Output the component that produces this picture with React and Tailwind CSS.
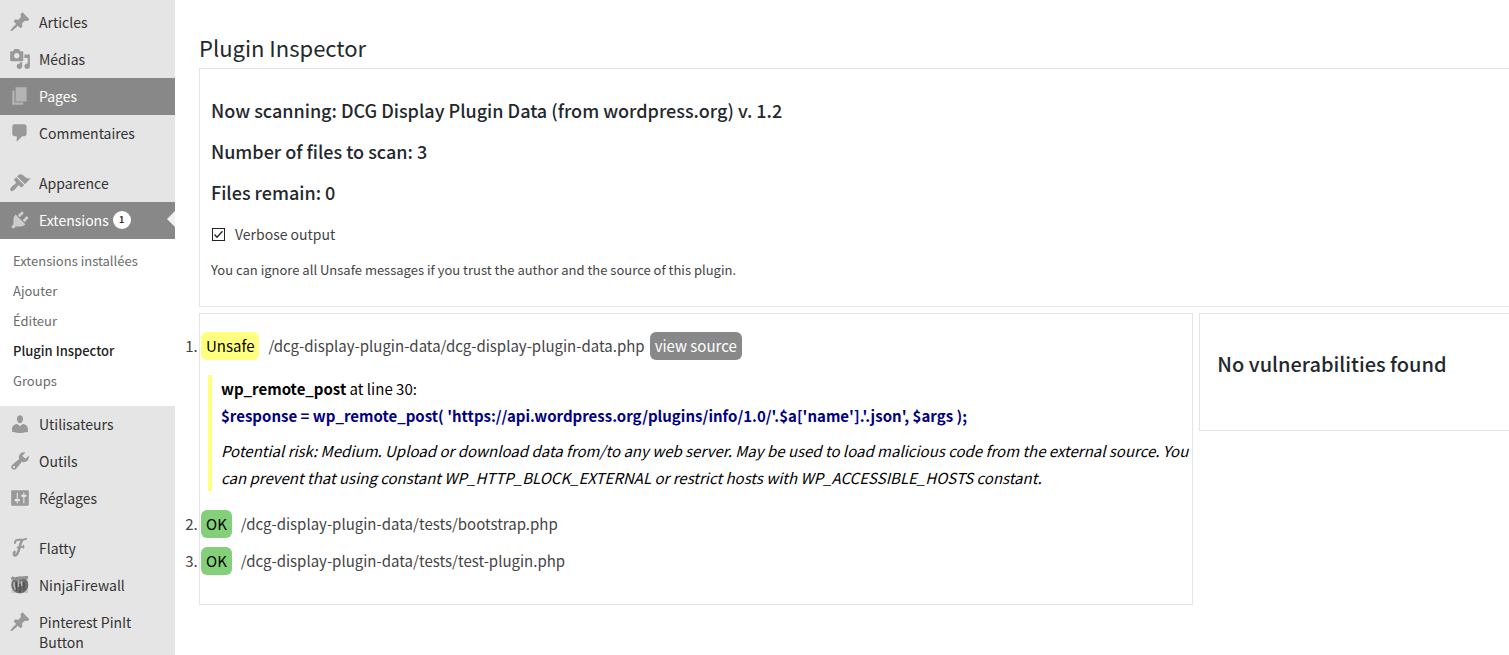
import React, { useState } from "react";

const icons = {
  post: "M10.44 3.02l1.82-1.82 6.36 6.35-1.83 1.82c-1.05-.68-2.48-.57-3.41.36l-.75.75c-.92.93-1.04 2.35-.35 3.41l-1.83 1.82-2.41-2.41-2.8 2.79c-.42.42-3.38 2.71-3.8 2.29s1.86-3.39 2.28-3.81l2.79-2.79L4.1 9.36l1.83-1.82c1.05.69 2.48.57 3.4-.36l.75-.75c.93-.92 1.05-2.35.36-3.41z",
  media: "M13 11V4c0-.55-.45-1-1-1h-1.67L9 1H5L3.67 3H2c-.55 0-1 .45-1 1v7c0 .55.45 1 1 1h10c.55 0 1-.45 1-1zM7 4.5c1.38 0 2.5 1.12 2.5 2.5S8.38 9.5 7 9.5 4.5 8.38 4.5 7 5.62 4.5 7 4.5zM14 6h5v10.5c0 1.38-1.12 2.5-2.5 2.5S14 17.88 14 16.5s1.12-2.5 2.5-2.5c.17 0 .34.02.5.05V9h-3V6zm-4 8.05V13h2v3.5c0 1.38-1.12 2.5-2.5 2.5S7 17.88 7 16.5 8.12 14 9.5 14c.17 0 .34.02.5.05z",
  page: "M6 15V2h10v13H6zm-1 1h8v2H3V5h2v11z",
  comments: "M5 2h9c1.1 0 2 .9 2 2v7c0 1.1-.9 2-2 2h-2l-5 5v-5H5c-1.1 0-2-.9-2-2V4c0-1.1.9-2 2-2z",
  appearance: "M14.48 11.06L7.41 3.99l1.5-1.5c.5-.56 2.3-.47 3.51.32 1.21.8 1.43 1.28 2.91 2.1 1.18.64 2.45 1.26 4.45.85zm-.71.71L6.7 4.7 4.93 6.47c-.39.39-.39 1.02 0 1.41l1.06 1.06c.39.39.39 1.03 0 1.42-.6.6-1.43 1.11-2.21 1.69-.35.26-.7.53-1.01.84C1.43 14.23.4 16.08 1.4 17.07c.99 1 2.84-.03 4.18-1.36.31-.31.58-.66.85-1.02.57-.78 1.08-1.61 1.69-2.21.39-.39 1.02-.39 1.41 0l1.06 1.06c.39.39 1.02.39 1.41 0z",
  plugins: "M13.11 4.36L9.87 7.6 8 5.73l3.24-3.24c.35-.34 1.05-.2 1.56.32.52.51.66 1.21.31 1.55zm-8 1.77l.91-1.12 9.01 9.01-1.19.84c-.71.71-2.63 1.16-3.82 1.16H6.14L4.9 17.26c-.59.59-1.54.59-2.12 0-.59-.58-.59-1.53 0-2.12l1.24-1.24v-3.88c0-1.13.4-3.19 1.09-3.89zm7.26 3.97l3.24-3.24c.34-.35 1.04-.21 1.55.31.52.51.66 1.21.31 1.55l-3.24 3.25z",
  users: "M10 9.25c-2.27 0-2.73-3.44-2.73-3.44C7 4.02 7.82 2 9.97 2c2.16 0 2.98 2.02 2.71 3.81 0 0-.41 3.44-2.68 3.44zm0 2.57L12.72 10c2.39 0 4.52 2.33 4.52 4.53v2.49s-3.65 1.13-7.24 1.13c-3.65 0-7.24-1.13-7.24-1.13v-2.49c0-2.25 1.94-4.48 4.47-4.48z",
  tools: "M16.68 9.77c-1.34 1.34-3.3 1.67-4.95.99l-5.41 6.52c-.99.99-2.59.99-3.58 0s-.99-2.59 0-3.57l6.52-5.42c-.68-1.65-.35-3.61.99-4.95 1.28-1.28 3.12-1.62 4.72-1.06l-2.89 2.89 2.82 2.82 2.86-2.87c.53 1.58.18 3.39-1.08 4.65zM3.81 16.21c.4.39 1.04.39 1.43 0 .4-.4.4-1.04 0-1.43-.39-.4-1.03-.4-1.43 0-.39.39-.39 1.03 0 1.43z",
  settings: "M18 16V4c0-.55-.45-1-1-1H3c-.55 0-1 .45-1 1v12c0 .55.45 1 1 1h14c.55 0 1-.45 1-1zM8 11h1c.55 0 1 .45 1 1s-.45 1-1 1H8v1.5c0 .28-.22.5-.5.5s-.5-.22-.5-.5V13H6c-.55 0-1-.45-1-1s.45-1 1-1h1V5.5c0-.28.22-.5.5-.5s.5.22.5.5V11zm5-2h-1c-.55 0-1-.45-1-1s.45-1 1-1h1V5.5c0-.28.22-.5.5-.5s.5.22.5.5V7h1c.55 0 1 .45 1 1s-.45 1-1 1h-1v5.5c0 .28-.22.5-.5.5s-.5-.22-.5-.5V9z",
};

const MenuIcon = ({ name }) => {
  if (name === "flatty") {
    return (
      <svg viewBox="0 0 22 22" className="mt-[7px] size-[22px] shrink-0" fill="none" stroke="currentColor" strokeLinecap="round">
        <path d="M6 6C5.500 3.500 8 2.500 11 2.800C13.500 3 15.500 2.500 17 1.800" strokeWidth="2" />
        <path d="M13 3.500C11 6 11 10 9.500 14C8.500 17.500 6 20 5 17.500C4.600 16.500 5 15.500 5.600 15" strokeWidth="2.600" />
        <path d="M8.500 10.500C11 9.800 13 10.500 14.500 9.500M14.500 8.500V11" strokeWidth="1.600" />
      </svg>
    );
  }
  if (name === "ninja") {
    return (
      <svg viewBox="0 0 22 22" className="mt-[7px] size-[22px] shrink-0">
        <path d="M2.500 3H19V19H2.500Z" fill="#c6c6c6" />
        <ellipse cx="10.800" cy="11" rx="8.500" ry="8.500" fill="#6c6c6c" />
        <path d="M2.500 3.500Q6 6 11 4.500T19 3.500" fill="none" stroke="#929292" strokeWidth="3" />
        <path d="M5 8Q4.500 12 6.500 16M9.500 6.500V13M12.500 7V12" fill="none" stroke="#b8b8b8" strokeWidth="1.600" />
        <path d="M7.500 8V17M11 10V18M15 8V16" fill="none" stroke="#505050" strokeWidth="1.500" />
      </svg>
    );
  }
  return (
    <svg viewBox="0 0 20 20" className="mt-[7px] size-[22px] shrink-0" fill="currentColor">
      <path d={icons[name]} />
    </svg>
  );
};

const menuGroups = [
  [
    { label: "Articles", icon: "post" },
    { label: "Médias", icon: "media" },
    { label: "Pages", icon: "page", hover: true },
    { label: "Commentaires", icon: "comments" },
  ],
  [
    { label: "Apparence", icon: "appearance" },
    {
      label: "Extensions",
      icon: "plugins",
      current: true,
      count: 1,
      children: ["Extensions installées", "Ajouter", "Éditeur", "Plugin Inspector", "Groups"],
    },
    { label: "Utilisateurs", icon: "users" },
    { label: "Outils", icon: "tools" },
    { label: "Réglages", icon: "settings" },
  ],
  [
    { label: "Flatty", icon: "flatty" },
    { label: "NinjaFirewall", icon: "ninja" },
    { label: "Pinterest PinIt Button", icon: "post" },
  ],
];

const MenuItem = ({ item }) => {
  const active = item.hover || item.current;
  return (
    <li>
      <a
        href="#"
        className={`relative flex items-start gap-2 pl-[9px] pr-5 text-[14px] leading-5 ${active ? "bg-[#888] text-white" : "text-[#333]"}`}
      >
        <span className={item.current ? "text-[#ccc]" : item.hover ? "text-[#b4b4b4]" : "text-[#999]"}>
          <MenuIcon name={item.icon} />
        </span>
        <span className="flex items-center gap-1 pt-2 pb-[9px]">
          {item.label}
          {item.count && (
            <span className="flex size-[18px] items-center justify-center rounded-full bg-white text-[9px] font-bold text-[#333]">
              {item.count}
            </span>
          )}
        </span>
        {item.current && (
          <span className="absolute right-0 top-[9px] border-y-8 border-r-8 border-y-transparent border-r-[#f1f1f1]" />
        )}
      </a>
      {item.children && (
        <ul className="bg-white pt-[7px] pb-[10px]">
          {item.children.map((child) => (
            <li key={child}>
              <a
                href="#"
                className={`block px-[13px] py-[5px] text-[13px] leading-5 ${child === "Plugin Inspector" ? "font-medium text-[#222]" : "text-[#6b6b6b]"}`}
              >
                {child}
              </a>
            </li>
          ))}
        </ul>
      )}
    </li>
  );
};

const StatusBadge = ({ status }) => (
  <span className={`rounded-md px-[5px] text-black ${status === "OK" ? "bg-[#84cf79]" : "bg-[#ffff80]"}`}>
    {status}
  </span>
);

const App = () => {
  const [verbose, setVerbose] = useState(true);

  return (
    <div className="flex h-screen overflow-hidden bg-white font-['Noto_Sans_CJK_SC',sans-serif] text-[#444]">
      <nav className="w-[175px] shrink-0 bg-[#e5e5e5] pt-1">
        {menuGroups.map((group, i) => (
          <ul key={i} className="mb-[13px]">
            {group.map((item) => (
              <MenuItem key={item.label} item={item} />
            ))}
          </ul>
        ))}
      </nav>

      <main className="min-w-0 flex-1 pl-6 pt-8">
        <h1 className="pb-1.5 text-[22px] leading-[30px] text-[#23282d]">Plugin Inspector</h1>

        <section className="border border-r-0 border-[#e5e5e5] px-[11px] pt-[29px] pb-[26px]">
          <div className="flex flex-col gap-[17px] text-[18px] font-medium leading-6 text-[#23282d]">
            <h3>Now scanning: DCG Display Plugin Data (from wordpress.org) v. 1.2</h3>
            <h3>Number of files to scan: 3</h3>
            <h3>Files remain: 0</h3>
          </div>
          <label className="mt-5 flex items-center text-[14px] leading-5">
            <input
              type="checkbox"
              checked={verbose}
              onChange={(e) => setVerbose(e.target.checked)}
              className="peer ml-px size-[13px] appearance-none border border-[#222]"
            />
            <svg viewBox="0 0 13 13" className="invisible -ml-[13px] size-[13px] pointer-events-none peer-checked:visible" fill="none" stroke="#222" strokeWidth="1.300">
              <path d="M2.500 6.500L5 9.200L10.500 3.300" />
            </svg>
            <span className="pl-[10px]">Verbose output</span>
          </label>
          <p className="mt-4 text-[13px] leading-5">
            You can ignore all Unsafe messages if you trust the author and the source of this plugin.
          </p>
        </section>

        <div className="mt-1.5 flex items-start gap-1.5">
          <section className="w-[75.9%] shrink-0 border border-[#e5e5e5] pt-[18px] pb-[29px] text-[15px] leading-7">
            <ol className="flex list-outside list-decimal flex-col gap-[9px] pl-px">
              <li>
                <div className="flex items-center">
                  <StatusBadge status="Unsafe" />
                  <span className="pl-[9px] pr-[5px]">/dcg-display-plugin-data/dcg-display-plugin-data.php</span>
                  <a href="#" className="rounded-md bg-[#888] px-[5px] text-white">view source</a>
                </div>
                <div className="ml-[7px] mt-[15px] mb-[10px] border-l-4 border-[#ffff80] pl-[9px] leading-[27px] text-black">
                  <p><strong>wp_remote_post</strong> at line 30:</p>
                  <p className="font-bold text-[#000080]">
                    $response = wp_remote_post( 'https://api.wordpress.org/plugins/info/1.0/'.$a['name'].'.json', $args );
                  </p>
                  <p className="pt-2 italic">
                    Potential risk: Medium. Upload or download data from/to any web server. May be used to load malicious code from the external source. You can prevent that using constant WP_HTTP_BLOCK_EXTERNAL or restrict hosts with WP_ACCESSIBLE_HOSTS constant.
                  </p>
                </div>
              </li>
              {["bootstrap.php", "test-plugin.php"].map((file) => (
                <li key={file}>
                  <div className="flex items-center gap-[9px]">
                    <StatusBadge status="OK" />
                    <span>/dcg-display-plugin-data/tests/{file}</span>
                  </div>
                </li>
              ))}
            </ol>
          </section>

          <section className="flex-1 border border-r-0 border-[#e5e5e5] px-[17px] pt-[35px] pb-[51px]">
            <h2 className="text-[20px] font-medium leading-[30px] text-[#23282d]">No vulnerabilities found</h2>
          </section>
        </div>
      </main>
    </div>
  );
};

export default App;
